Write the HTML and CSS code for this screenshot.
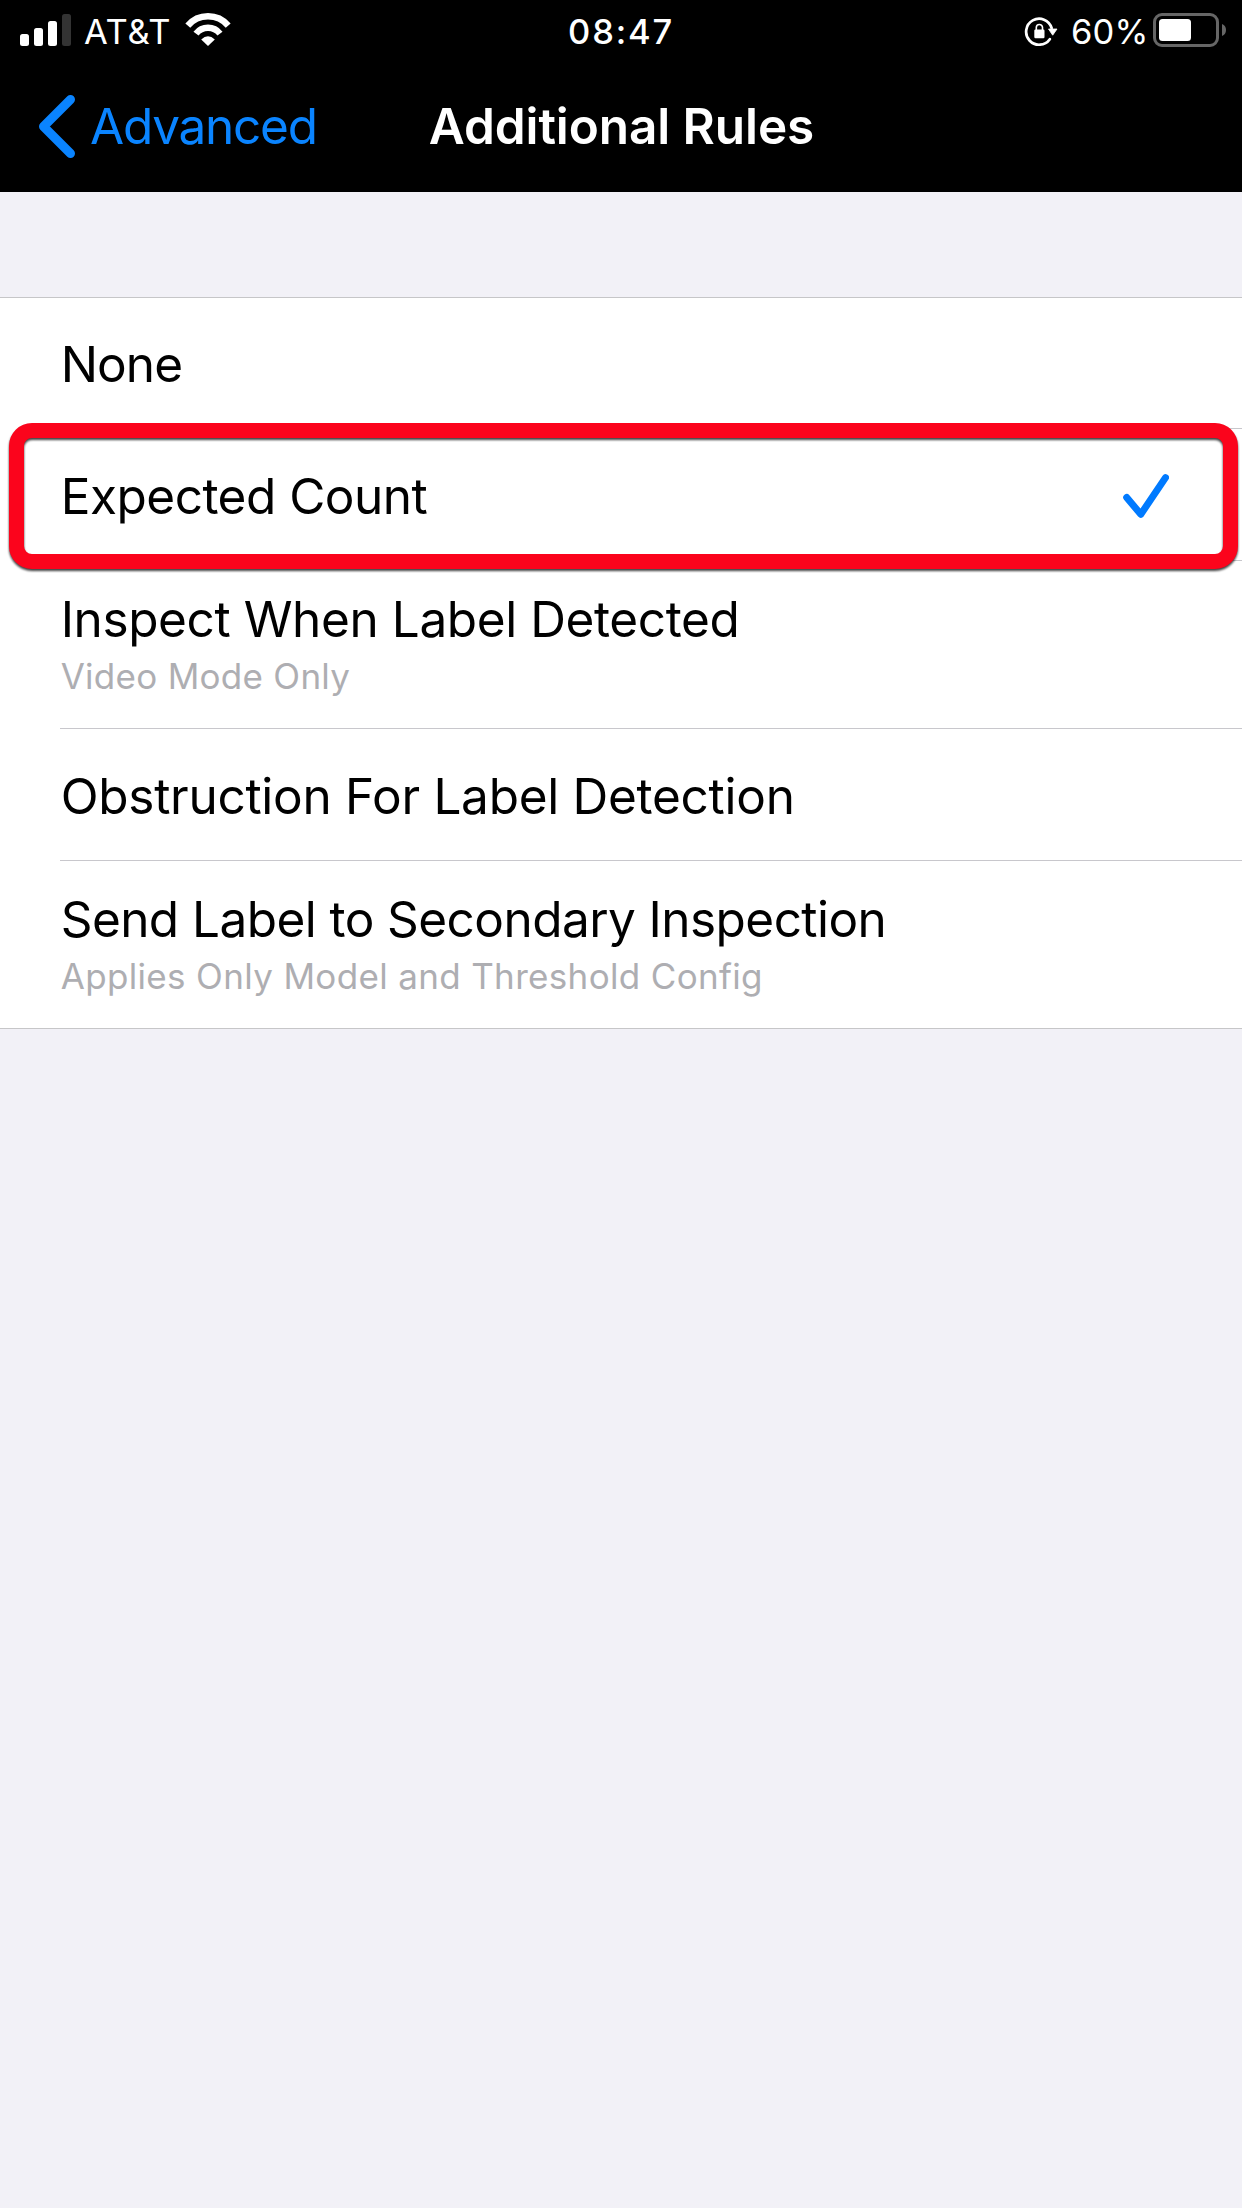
FILE: index.html
```html
<!DOCTYPE html>
<html lang="en">
<head>
<meta charset="utf-8">
<title>Additional Rules</title>
<link rel="stylesheet" href="styles.css">
</head>
<body>
<header class="header">
  <div class="status">
    <div class="status-left">
      <svg class="signal" width="51" height="32" viewBox="0 0 51 32" fill="#fff">
        <rect x="0" y="20" width="9" height="12" rx="2.5"/>
        <rect x="14" y="14" width="9" height="18" rx="2.5"/>
        <rect x="28" y="7" width="9" height="25" rx="2.5"/>
        <rect x="42" y="0" width="9" height="32" rx="2.5" fill="#333"/>
      </svg>
      <span class="carrier">AT&amp;T</span>
      <svg class="wifi" width="46" height="34" viewBox="185 12 46 34" fill="none" stroke="#fff" stroke-width="6.4">
        <path d="M187.8 25.6A26.5 26.5 0 0 1 228.2 25.6"/>
        <path d="M196 33.6A15.2 15.2 0 0 1 220 33.6"/>
        <path d="M208 46L201.2 39.6Q208 32.8 214.8 39.6Z" fill="#fff" stroke="none"/>
      </svg>
    </div>
    <span class="clock">08:47</span>
    <div class="status-right">
      <svg class="lock" width="34" height="34" viewBox="1023 15 34 34" fill="none" stroke="#fff">
        <path d="M1050.6 28A13 13 0 1 0 1048.8 39.2" stroke-width="2.7" stroke-linecap="round"/>
        <path d="M1047.5 29H1056L1051.7 35.2Z" fill="#fff" stroke-width=".8" stroke-linejoin="round"/>
        <rect x="1033.3" y="29.6" width="10.2" height="8.6" rx="1.2" fill="#fff" stroke="none"/>
        <path d="M1035.3 30V27.6A3.1 3.1 0 0 1 1041.5 27.6V30" stroke-width="1.6"/>
      </svg>
      <span class="percent">60%</span>
      <svg class="battery" width="73" height="34" viewBox="0 0 73 34">
        <rect x="1.5" y="1.5" width="63" height="31" rx="7.5" fill="none" stroke="#666" stroke-width="3"/>
        <rect x="6" y="6" width="32" height="22" rx="3.5" fill="#fff"/>
        <path d="M69 11Q73 12.5 73 17T69 23Z" fill="#666"/>
      </svg>
    </div>
  </div>
  <nav class="nav">
    <a class="back">
      <svg class="chevron" width="36" height="64" viewBox="39 95 36 64" fill="none" stroke="#0a84ff" stroke-width="9" stroke-linecap="round" stroke-linejoin="round">
        <path d="M70.5 99.5L43.5 126.5L70.5 153.5"/>
      </svg>
      <span class="back-label">Advanced</span>
    </a>
    <h1 class="title">Additional Rules</h1>
  </nav>
</header>
<main>
  <ul class="list">
    <li class="row"><span class="label none">None</span></li>
    <li class="row selected">
      <span class="label expected">Expected Count</span>
      <svg class="check" width="46" height="46" viewBox="1123 473 46 46" fill="none" stroke="#007aff" stroke-width="7" stroke-linecap="round" stroke-linejoin="round">
        <path d="M1126.7 497.5L1140.8 514.3L1165.5 477.6"/>
      </svg>
      <span class="highlight"></span>
    </li>
    <li class="row detailed">
      <span class="label inspect">Inspect When Label Detected</span>
      <span class="sub video">Video Mode Only</span>
    </li>
    <li class="row"><span class="label obstruction">Obstruction For Label Detection</span></li>
    <li class="row detailed">
      <span class="label send">Send Label to Secondary Inspection</span>
      <span class="sub applies">Applies Only Model and Threshold Config</span>
    </li>
  </ul>
</main>
</body>
</html>
```
FILE: styles.css
```css
* { box-sizing: border-box; }

body {
  margin: 0;
  min-height: 2208px;
  background: #f2f1f7;
  color: #000;
  font-family: Inter, "Liberation Sans", sans-serif;
  white-space: nowrap;
}

svg { display: block; flex: none; }

.header { height: 192px; background: #000; color: #fff; }

.status {
  display: grid;
  grid-template-columns: 1fr auto 1fr;
  height: 60px;
  padding-top: 11px;
  font-size: 34.5px;
  line-height: 41px;
}
.status-left, .status-right { display: flex; align-items: flex-start; }
.status-left { padding-left: 20px; }
.status-right { justify-content: flex-end; padding-right: 16px; }
.signal { margin: 3px 13px 0 0; }
.carrier { width: 101px; letter-spacing: 0.7px; }
.wifi { margin-top: 1px; }
.clock { font-weight: 500; letter-spacing: 1.8px; }
.lock { margin: 4px 13px 0 0; }
.percent { width: 82px; letter-spacing: 0.2px; }
.battery { margin-top: 2px; }

.nav {
  display: grid;
  grid-template-columns: 1fr auto 1fr;
  height: 132px;
  padding: 36px 0 0 1px;
  font-size: 49.5px;
  line-height: 60px;
}
.back { display: flex; padding-left: 38px; color: #0a84ff; }
.chevron { margin: -1px 15px 0 0; }
.back-label { letter-spacing: -1.25px; }
.title { margin: 0; font-size: inherit; font-weight: 600; letter-spacing: -0.08px; }

.list {
  margin: 105px 0 0;
  padding: 0;
  list-style: none;
  background: #fff;
  border-top: 1px solid #c6c6c8;
  border-bottom: 1px solid #c6c6c8;
}
.row {
  position: relative;
  display: flex;
  justify-content: space-between;
  height: 132px;
  margin-left: 60px;
  padding-top: 37px;
  border-bottom: 1px solid #c8c7cc;
}
.row:first-child { height: 131px; padding-top: 36px; }
.row:last-child { height: 167px; border-bottom: 0; }
.detailed {
  flex-direction: column;
  justify-content: flex-start;
  gap: 6px;
  height: 168px;
  padding-top: 28px;
}
.label { padding-left: 0.7px; font-size: 49.5px; line-height: 60px; }
.sub { padding-left: 0.7px; font-size: 35px; line-height: 42px; color: #aeaeb2; }
.none { letter-spacing: -0.9px; }
.expected { letter-spacing: -0.5px; }
.inspect { letter-spacing: -0.4px; }
.obstruction { letter-spacing: -0.28px; }
.send { letter-spacing: -0.56px; }
.video { letter-spacing: 0.28px; }
.applies { letter-spacing: 0.34px; }
.check { margin: 7px 73px 0 0; }

.highlight {
  position: absolute;
  z-index: 1;
  top: -6px;
  left: -51px;
  width: 1229px;
  height: 146px;
  border: 15px solid #fb041c;
  border-radius: 23px;
  filter: drop-shadow(0 2px 1px rgba(0, 0, 0, 0.75));
}
```
